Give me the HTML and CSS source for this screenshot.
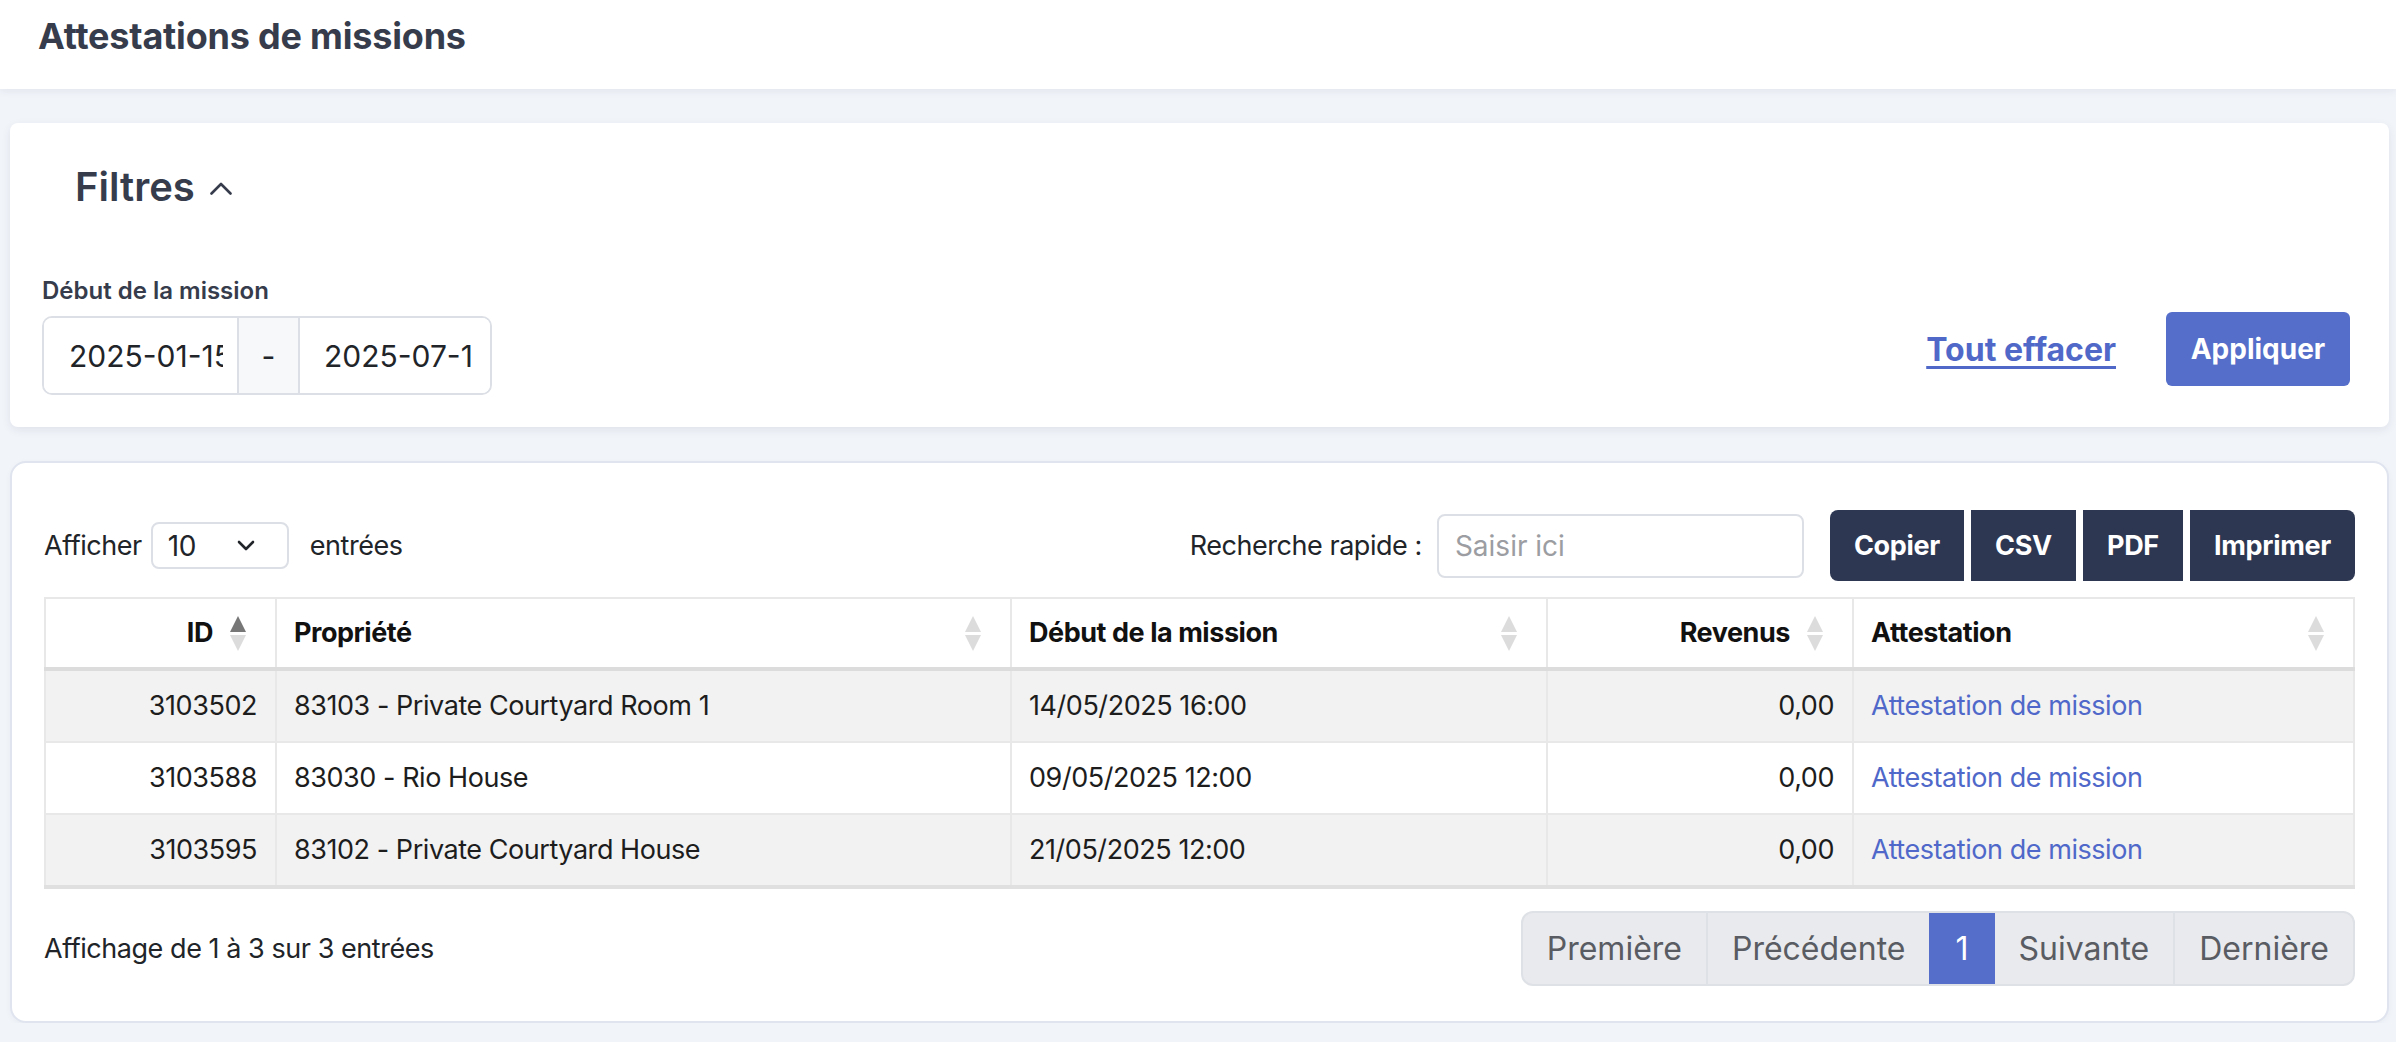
FILE: index.html
```html
<!DOCTYPE html>
<html lang="fr">
<head>
  <meta charset="UTF-8">
  <meta name="viewport" content="width=device-width, initial-scale=1.0">
  <title>Attestations de missions</title>
  <link rel="stylesheet" href="styles.css">
</head>
<body>
  <!-- Header -->
  <div class="header">
    <h1>Attestations de missions</h1>
  </div>

  <!-- Filters -->
  <div class="card filters-card">
    <h2 class="filters-title">Filtres
      <svg class="chevron-up" width="22" height="13" viewBox="0 0 22 13"><polyline points="1.5,11.5 11,2 20.5,11.5" fill="none" stroke="#363c4b" stroke-width="2.6" stroke-linecap="round" stroke-linejoin="round"/></svg>
    </h2>
    <div class="filters-row">
      <div class="field">
        <label class="field-label">Début de la mission</label>
        <div class="date-range">
          <input type="text" class="date-input" value="2025-01-15">
          <span class="date-sep">-</span>
          <input type="text" class="date-input date-end" value="2025-07-15">
        </div>
      </div>
      <div class="filters-actions">
        <a href="#" class="clear-link">Tout effacer</a>
        <button class="btn-apply">Appliquer</button>
      </div>
    </div>
  </div>

  <!-- Table -->
  <div class="card table-card">
    <div class="table-controls">
      <div class="length">
        Afficher
        <div class="length-select">
          <span>10</span>
          <svg width="18" height="11" viewBox="0 0 18 11"><polyline points="2,2 9,9 16,2" fill="none" stroke="#212529" stroke-width="2.6" stroke-linecap="round" stroke-linejoin="round"/></svg>
        </div>
        <span class="length-after">entrées</span>
      </div>
      <div class="controls-right">
        <label class="search-label">Recherche rapide :</label>
        <input type="search" class="search-input" placeholder="Saisir ici">
        <div class="export-buttons">
          <button class="btn-dark">Copier</button>
          <button class="btn-dark">CSV</button>
          <button class="btn-dark">PDF</button>
          <button class="btn-dark">Imprimer</button>
        </div>
      </div>
    </div>

    <table class="data-table">
      <colgroup>
        <col style="width: 231px">
        <col style="width: 735px">
        <col style="width: 536px">
        <col style="width: 306px">
        <col>
      </colgroup>
      <thead>
        <tr>
          <th class="num">ID<span class="sort active"></span></th>
          <th>Propriété<span class="sort"></span></th>
          <th>Début de la mission<span class="sort"></span></th>
          <th class="num">Revenus<span class="sort"></span></th>
          <th>Attestation<span class="sort"></span></th>
        </tr>
      </thead>
      <tbody>
        <tr class="odd">
          <td class="num">3103502</td>
          <td>83103 - Private Courtyard Room 1</td>
          <td>14/05/2025 16:00</td>
          <td class="num">0,00</td>
          <td><a href="#">Attestation de mission</a></td>
        </tr>
        <tr>
          <td class="num">3103588</td>
          <td>83030 - Rio House</td>
          <td>09/05/2025 12:00</td>
          <td class="num">0,00</td>
          <td><a href="#">Attestation de mission</a></td>
        </tr>
        <tr class="odd">
          <td class="num">3103595</td>
          <td>83102 - Private Courtyard House</td>
          <td>21/05/2025 12:00</td>
          <td class="num">0,00</td>
          <td><a href="#">Attestation de mission</a></td>
        </tr>
      </tbody>
    </table>

    <div class="table-footer">
      <div class="info">Affichage de 1 à 3 sur 3 entrées</div>
      <div class="pagination">
        <span class="page-btn">Première</span>
        <span class="page-btn">Précédente</span>
        <span class="page-btn current">1</span>
        <span class="page-btn">Suivante</span>
        <span class="page-btn">Dernière</span>
      </div>
    </div>
  </div>
</body>
</html>
```

FILE: styles.css
```css
* {
  margin: 0;
  padding: 0;
  box-sizing: border-box;
}

body {
  font-family: Inter, "Noto Sans", sans-serif;
  background-color: #f1f4f9;
  color: #212529;
  overflow: hidden;
}

/* Header */
.header {
  height: 89px;
  background-color: #fff;
  padding: 15px 38px 0;
  box-shadow: 0 2px 8px rgba(30, 40, 70, 0.07);
  position: relative;
  z-index: 2;
}

.header h1 {
  font-size: 36px;
  line-height: 43px;
  font-weight: 700;
  color: #363c4b;
  letter-spacing: -0.2px;
}

/* Cards */
.card {
  background-color: #fff;
  margin: 34px 7px 0 10px;
}

.filters-card {
  border-radius: 8px;
  padding: 40px 39px 32px 32px;
  box-shadow: 0 3px 10px rgba(30, 40, 70, 0.08);
}

.filters-title {
  display: flex;
  align-items: center;
  gap: 15px;
  margin-left: 33px;
  font-size: 40px;
  line-height: 48px;
  font-weight: 600;
  color: #363c4b;
}

.chevron-up {
  margin-top: 2px;
}

.filters-row {
  display: flex;
  justify-content: space-between;
  align-items: flex-end;
  margin-top: 65px;
}

.field-label {
  display: block;
  font-size: 24px;
  line-height: 29px;
  font-weight: 600;
  color: #363c4b;
  margin-bottom: 11px;
}

.date-range {
  display: flex;
  width: 450px;
  height: 79px;
  border: 2px solid #dcdfe5;
  border-radius: 10px;
  overflow: hidden;
}

.date-input {
  width: 193px;
  border: none;
  outline: none;
  padding: 0 14px 0 25px;
  font-family: Inter, sans-serif;
  font-size: 30px;
  color: #212529;
  background: #fff;
}

.date-input.date-end {
  padding: 0 22px 0 24px;
}

.date-sep {
  width: 63px;
  flex-shrink: 0;
  display: flex;
  align-items: center;
  justify-content: center;
  background-color: #f7f8fa;
  border-left: 2px solid #dcdfe5;
  border-right: 2px solid #dcdfe5;
  font-size: 30px;
  color: #212529;
}

.filters-actions {
  display: flex;
  align-items: center;
  gap: 50px;
  margin-bottom: 9px;
}

.clear-link {
  font-size: 32px;
  font-weight: 700;
  color: #5069c9;
  text-decoration: underline;
  text-decoration-thickness: 3px;
  text-underline-offset: 5px;
}

.btn-apply {
  width: 184px;
  height: 74px;
  border: none;
  border-radius: 6px;
  background-color: #546ec9;
  color: #fff;
  font-family: Inter, sans-serif;
  font-size: 28px;
  font-weight: 700;
}

/* Table card */
.table-card {
  border: 2px solid #dfe4ee;
  border-radius: 16px;
  padding: 47px 32px 35px;
  box-shadow: 0 2px 6px rgba(30, 40, 70, 0.04);
  letter-spacing: -0.45px;
}

.table-controls {
  display: flex;
  justify-content: space-between;
  align-items: center;
  height: 71px;
  font-size: 27px;
  color: #212529;
}

.length {
  display: flex;
  align-items: center;
}

.length-select {
  display: flex;
  align-items: center;
  justify-content: space-between;
  width: 138px;
  height: 47px;
  margin-left: 9px;
  padding: 0 32px 0 15px;
  border: 2px solid #dcdfe5;
  border-radius: 8px;
  font-size: 28px;
}

.length-after {
  margin-left: 21px;
}

.controls-right {
  display: flex;
  align-items: center;
}

.search-input {
  width: 367px;
  height: 64px;
  margin-left: 15px;
  padding: 0 16px;
  border: 2px solid #dcdfe5;
  border-radius: 8px;
  font-family: Inter, sans-serif;
  font-size: 28px;
  outline: none;
}

.search-input::placeholder {
  color: #9b9da2;
}

.export-buttons {
  display: flex;
  gap: 7px;
  margin-left: 26px;
}

.btn-dark {
  height: 71px;
  padding: 0 24px;
  border: none;
  background-color: #2d3752;
  color: #fff;
  font-family: Inter, sans-serif;
  font-size: 27px;
  font-weight: 700;
  letter-spacing: -0.3px;
}

.btn-dark:first-child {
  border-radius: 8px 0 0 8px;
}

.btn-dark:last-child {
  border-radius: 0 8px 8px 0;
}

/* Data table */
.data-table {
  width: 100%;
  margin-top: 16px;
  border-collapse: collapse;
  table-layout: fixed;
  font-size: 27px;
  line-height: 34px;
}

.data-table th,
.data-table td {
  border: 2px solid #e8e8e8;
  text-align: left;
}

.data-table th {
  position: relative;
  padding: 17px 62px 17px 17px;
  font-weight: 700;
  color: #111;
  border-bottom: 4px solid #dcdcdc;
}

.data-table td {
  padding: 18px 18px 18px 17px;
  color: #1d1d1d;
}

.data-table .num {
  text-align: right;
}

.data-table td.num {
  padding-right: 18px;
}

.data-table tr.odd td {
  background-color: #f2f2f2;
}

.data-table tbody tr:last-child td {
  border-bottom: 4px solid #e0e0e0;
}

.data-table a {
  color: #4f68c9;
  text-decoration: none;
}

/* Sort arrows */
.sort {
  position: absolute;
  right: 28px;
  top: 50%;
  width: 17px;
  height: 35px;
  margin-top: -17px;
}

.sort::before,
.sort::after {
  content: "";
  position: absolute;
  left: 0;
  border-left: 8.5px solid transparent;
  border-right: 8.5px solid transparent;
}

.sort::before {
  top: 0;
  border-bottom: 16px solid #dcdcdc;
}

.sort::after {
  bottom: 0;
  border-top: 16px solid #dcdcdc;
}

.sort.active::before {
  border-bottom-color: #777;
}

/* Footer */
.table-footer {
  display: flex;
  justify-content: space-between;
  align-items: center;
  margin-top: 22px;
}

.info {
  font-size: 27px;
  color: #212529;
}

.pagination {
  display: flex;
  height: 75px;
  border: 2px solid #dee1e6;
  border-radius: 12px;
  background-color: #e9eaee;
  overflow: hidden;
  letter-spacing: 0;
}

.page-btn {
  display: flex;
  align-items: center;
  padding: 0 24px;
  font-size: 32px;
  color: #595c62;
  border-left: 2px solid #dee1e6;
}

.page-btn:first-child {
  border-left: none;
}

.page-btn.current {
  background-color: #546ec9;
  color: #fff;
  padding: 0 26px;
  border-left: none;
}

.page-btn.current + .page-btn {
  border-left: none;
}
```
